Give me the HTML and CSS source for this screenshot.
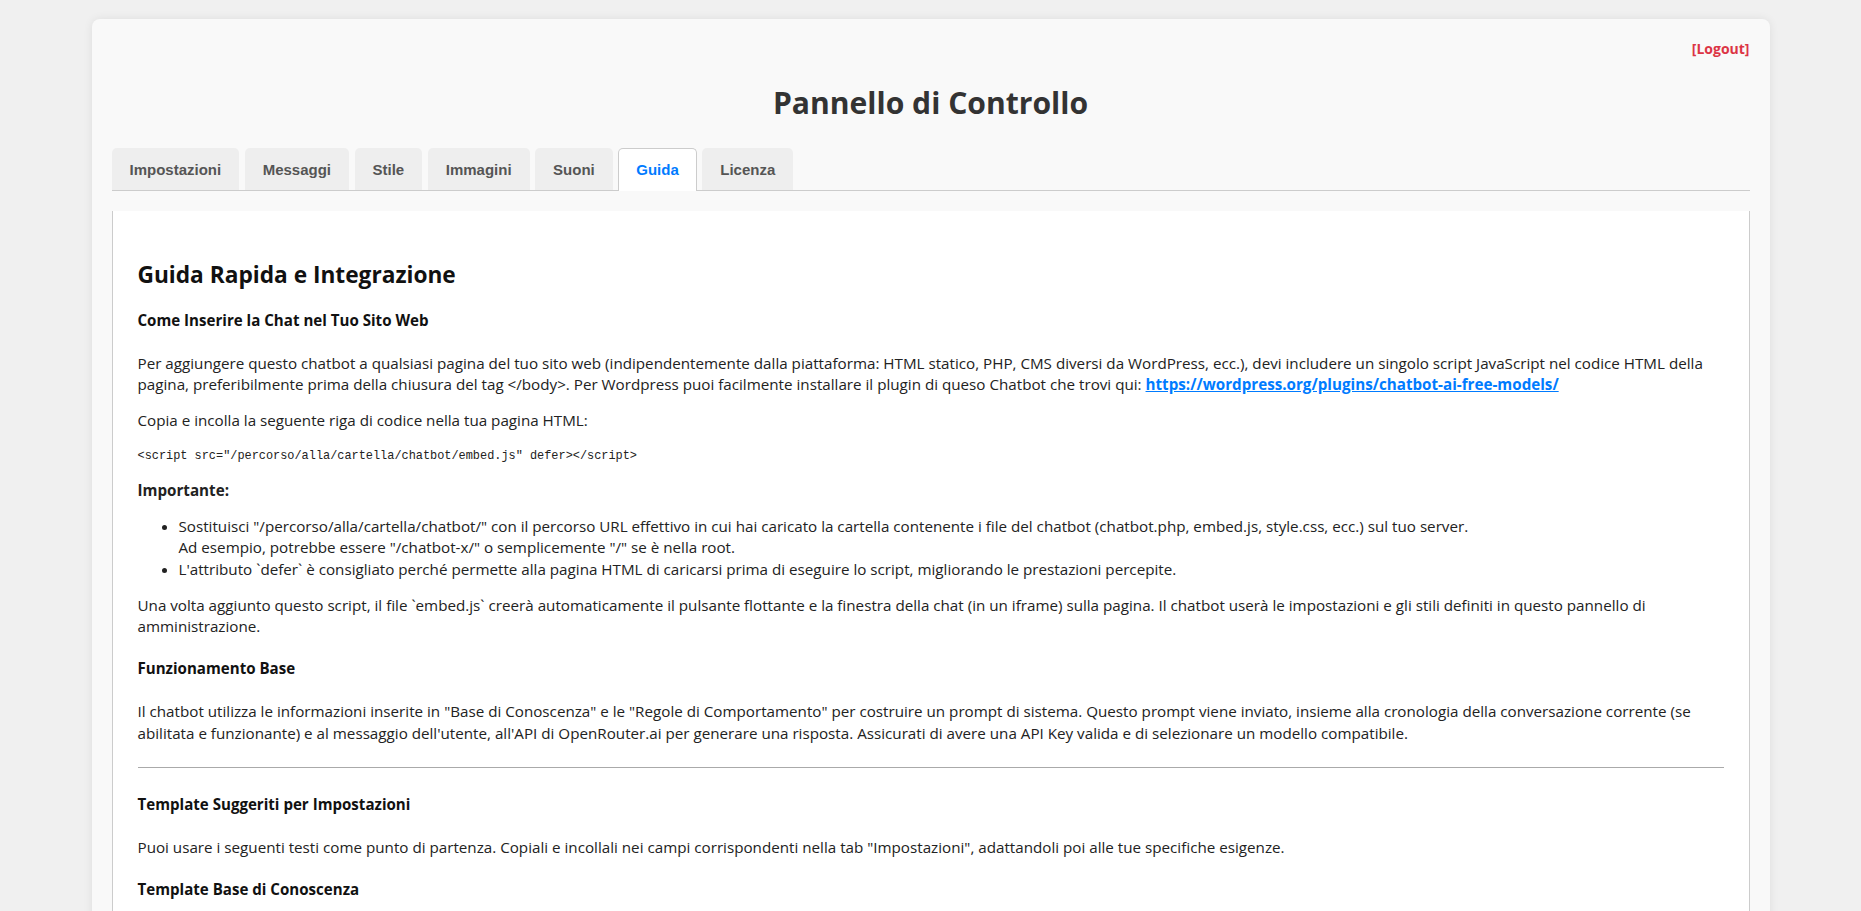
FILE: index.html
```html
<!DOCTYPE html>
<html lang="it">
<head>
<meta charset="utf-8">
<title>Pannello di Controllo</title>
<link rel="stylesheet" href="styles.css">
</head>
<body>
<div class="card">
  <div class="topbar"><a class="logout" href="#">[Logout]</a></div>
  <h1 class="title">Pannello di Controllo</h1>
  <nav class="tabs">
    <a class="tab" href="#">Impostazioni</a>
    <a class="tab" href="#">Messaggi</a>
    <a class="tab" href="#">Stile</a>
    <a class="tab" href="#">Immagini</a>
    <a class="tab" href="#">Suoni</a>
    <a class="tab active" href="#">Guida</a>
    <a class="tab" href="#">Licenza</a>
  </nav>
  <div class="panel">
    <h2 class="sec-title">Guida Rapida e Integrazione</h2>
    <h3 class="sub-title">Come Inserire la Chat nel Tuo Sito Web</h3>
    <p class="text">Per aggiungere questo chatbot a qualsiasi pagina del tuo sito web (indipendentemente dalla piattaforma: HTML statico, PHP, CMS diversi da WordPress, ecc.), devi includere un singolo script JavaScript nel codice HTML della pagina, preferibilmente prima della chiusura del tag &lt;/body&gt;. Per Wordpress puoi facilmente installare il plugin di queso Chatbot che trovi qui: <a class="link" href="#">https://wordpress.org/plugins/chatbot-ai-free-models/</a></p>
    <p class="text">Copia e incolla la seguente riga di codice nella tua pagina HTML:</p>
    <pre class="code">&lt;script src="/percorso/alla/cartella/chatbot/embed.js" defer&gt;&lt;/script&gt;</pre>
    <p class="text"><strong>Importante:</strong></p>
    <ul class="list">
      <li>Sostituisci "/percorso/alla/cartella/chatbot/" con il percorso URL effettivo in cui hai caricato la cartella contenente i file del chatbot (chatbot.php, embed.js, style.css, ecc.) sul tuo server.<br>Ad esempio, potrebbe essere "/chatbot-x/" o semplicemente "/" se è nella root.</li>
      <li>L'attributo `defer` è consigliato perché permette alla pagina HTML di caricarsi prima di eseguire lo script, migliorando le prestazioni percepite.</li>
    </ul>
    <p class="text">Una volta aggiunto questo script, il file `embed.js` creerà automaticamente il pulsante flottante e la finestra della chat (in un iframe) sulla pagina. Il chatbot userà le impostazioni e gli stili definiti in questo pannello di amministrazione.</p>
    <h3 class="sub-title">Funzionamento Base</h3>
    <p class="text">Il chatbot utilizza le informazioni inserite in "Base di Conoscenza" e le "Regole di Comportamento" per costruire un prompt di sistema. Questo prompt viene inviato, insieme alla cronologia della conversazione corrente (se abilitata e funzionante) e al messaggio dell'utente, all'API di OpenRouter.ai per generare una risposta. Assicurati di avere una API Key valida e di selezionare un modello compatibile.</p>
    <hr class="rule">
    <h3 class="sub-title">Template Suggeriti per Impostazioni</h3>
    <p class="text">Puoi usare i seguenti testi come punto di partenza. Copiali e incollali nei campi corrispondenti nella tab "Impostazioni", adattandoli poi alle tue specifiche esigenze.</p>
    <h3 class="sub-title">Template Base di Conoscenza</h3>
    <p class="text">Nome dell'attività: [Nome]. Settore: [Settore]. Orari di apertura: [Orari]. Contatti: [Email / Telefono].</p>
  </div>
</div>
</body>
</html>
```

FILE: styles.css
```css
* { box-sizing: border-box; }
body {
  margin: 0;
  background: #f0f0f0;
  font-family: "Open Sans", "Liberation Sans", sans-serif;
  color: #222;
}
.card {
  width: 1678px;
  margin: 19px auto;
  padding: 20px;
  background: #f9f9f9;
  border-radius: 8px;
  box-shadow: 0 0 10px rgba(0, 0, 0, 0.08);
}
.topbar {
  display: flex;
  justify-content: flex-end;
  height: 20px;
  line-height: 20px;
}
.logout {
  color: #dc3545;
  font-weight: 700;
  font-size: 14px;
  text-decoration: none;
}
.title {
  margin: 24px 0 25px;
  text-align: center;
  font-size: 30.1px;
  line-height: 40px;
  font-weight: 700;
  color: #333;
}
.tabs {
  display: flex;
  gap: 5.5px;
  border-bottom: 1px solid #ccc;
}
.tab {
  font-family: "Liberation Sans", Arial, sans-serif;
  font-weight: 700;
  font-size: 15px;
  line-height: 17px;
  padding: 12px 17px;
  border: 1px solid transparent;
  border-bottom: 0;
  border-radius: 5px 5px 0 0;
  background: #eee;
  color: #555;
  text-decoration: none;
}
.tab.active {
  background: #fff;
  color: #007bff;
  border-color: #ccc;
  margin-bottom: -1px;
  padding-bottom: 13px;
}
.panel {
  margin-top: 20px;
  padding: 25px;
  background: #fff;
  border: 1px solid #ccc;
  border-top: 0;
  min-height: 900px;
}
.sec-title {
  margin: 24px 0 21px;
  font-size: 22.7px;
  line-height: 29px;
  color: #111;
}
.sub-title {
  margin: 21px 0 21.5px;
  font-size: 15.1px;
  line-height: 21.3px;
  color: #111;
}
.text {
  margin: 15px 0;
  font-size: 15.2px;
  line-height: 21.3px;
}
.list {
  margin: 15px 0;
  padding-left: 41px;
  font-size: 15.2px;
  line-height: 21.3px;
}
.link {
  color: #007bff;
  font-weight: 700;
}
.code {
  margin: 16px 0 14px;
  font-family: "Liberation Mono", monospace;
  font-size: 11.9px;
  line-height: 17px;
}
.rule {
  margin: 23px 0 26.5px;
  border: 0;
  border-top: 1px solid #aaa;
}
```
